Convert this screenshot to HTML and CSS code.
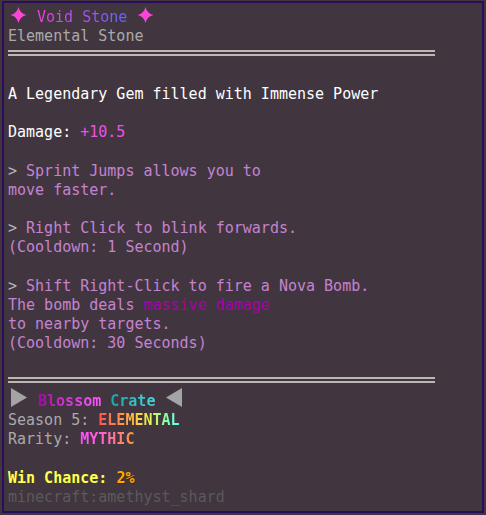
FILE: index.html
```html
<!DOCTYPE html>
<html lang="en">
<head>
<meta charset="utf-8">
<title>Void Stone</title>
<link rel="stylesheet" href="styles.css">
</head>
<body>
<div class="tooltip">
  <div class="line title"><svg class="star star-left" viewBox="0 0 16 16" width="17" height="16"><path d="M8 0Q9.5 6.5 16 8Q9.5 9.5 8 16Q6.5 9.5 0 8Q6.5 6.5 8 0Z"/></svg> <span class="grad grad-void">Void Stone</span> <svg class="star star-right" viewBox="0 0 16 16" width="17" height="16"><path d="M8 0Q9.5 6.5 16 8Q9.5 9.5 8 16Q6.5 9.5 0 8Q6.5 6.5 8 0Z"/></svg></div>
  <div class="line gray">Elemental Stone</div>
  <div class="sep"><i></i><i></i></div>
  <div class="line"></div>
  <div class="line white">A Legendary Gem filled with Immense Power</div>
  <div class="line"></div>
  <div class="line white">Damage: <span class="pink">+10.5</span></div>
  <div class="line"></div>
  <div class="line lav"><span class="arrow">&gt;</span> Sprint Jumps allows you to</div>
  <div class="line lav">move faster.</div>
  <div class="line"></div>
  <div class="line lav"><span class="arrow">&gt;</span> Right Click to blink forwards.</div>
  <div class="line lav">(Cooldown: 1 Second)</div>
  <div class="line"></div>
  <div class="line lav"><span class="arrow">&gt;</span> Shift Right-Click to fire a Nova Bomb.</div>
  <div class="line lav">The bomb deals <span class="purple">massive damage</span></div>
  <div class="line lav">to nearby targets.</div>
  <div class="line lav">(Cooldown: 30 Seconds)</div>
  <div class="line"></div>
  <div class="sep"><i></i><i></i></div>
  <div class="line crate"><svg class="tri tri-right" viewBox="0 0 16 19" width="16" height="19"><polygon points="0,0 16,9.5 0,19"/></svg> <span class="grad grad-blossom b">Blossom</span> <span class="grad grad-crate b">Crate</span> <svg class="tri tri-left" viewBox="0 0 16 19" width="16" height="19"><polygon points="16,0 0,9.5 16,19"/></svg></div>
  <div class="line gray">Season 5: <span class="grad grad-elemental b">ELEMENTAL</span></div>
  <div class="line gray">Rarity: <span class="grad grad-mythic b">MYTHIC</span></div>
  <div class="line"></div>
  <div class="line"><span class="yellow b">Win Chance:</span> <span class="orange b">2%</span></div>
  <div class="line dark">minecraft:amethyst_shard</div>
</div>
</body>
</html>
```

FILE: styles.css
```css
html, body {
  margin: 0;
  padding: 0;
  background: #413640;
}

.tooltip {
  margin: 1px 2px 0 2px;
  width: 482px;
  height: 512px;
  box-sizing: border-box;
  border: 2px solid #2c0d5c;
  padding: 5px 4px 0 4px;
  font-family: "DejaVu Sans Mono", "Liberation Mono", monospace;
  font-size: 15px;
  line-height: 19.2px;
  color: #ffffff;
}

.line {
  height: 19.2px;
  white-space: pre;
}

.b { font-weight: bold; }

.white { color: #ffffff; }
.gray { color: #aaaaaa; }
.lav { color: #c583cf; }
.arrow { color: #b9b4bb; }
.pink { color: #ef4fe8; }
.purple { color: #aa00aa; }
.dark { color: #5a5a5a; }
.yellow { color: #ffff55; text-shadow: 1px 1px 0 #3f3f15; }
.orange { color: #ffaa00; text-shadow: 1px 1px 0 #3f2a00; }

.grad {
  -webkit-background-clip: text;
  background-clip: text;
  color: transparent;
}

.grad-void { background-image: linear-gradient(90deg, #f040dc, #b050f0 45%, #5f66ff); }
.grad-blossom { background-image: linear-gradient(90deg, #9c0aa0, #d43cd6 50%, #ff55ff); }
.grad-crate { background-image: linear-gradient(90deg, #1aa6a6, #45d8d8); }
.grad-elemental { background-image: linear-gradient(90deg, #ff5252, #ff8a45 25%, #ffd23d 50%, #d8f850 65%, #8affa0 82%, #55ffff); }
.grad-mythic { background-image: linear-gradient(90deg, #ff4cff, #ff66c8 45%, #ff9a30); }

.star {
  fill: #fc45d6;
  vertical-align: top;
  margin-top: -1px;
  margin-bottom: -1px;
}
.star-left { margin-left: 2px; margin-right: 1px; }
.star-right { margin-left: 1px; }

.tri {
  fill: #a4a4a4;
  vertical-align: top;
  margin-top: -4px;
}
.tri-right { margin-left: 3px; margin-right: 2px; }
.tri-left { margin-left: 2px; }

.sep {
  height: 19.2px;
  box-sizing: border-box;
  padding-top: 4px;
  display: flex;
  flex-direction: column;
  gap: 2px;
}
.sep i {
  display: block;
  width: 427px;
  height: 2px;
  background: #bcb8b4;
}
```
